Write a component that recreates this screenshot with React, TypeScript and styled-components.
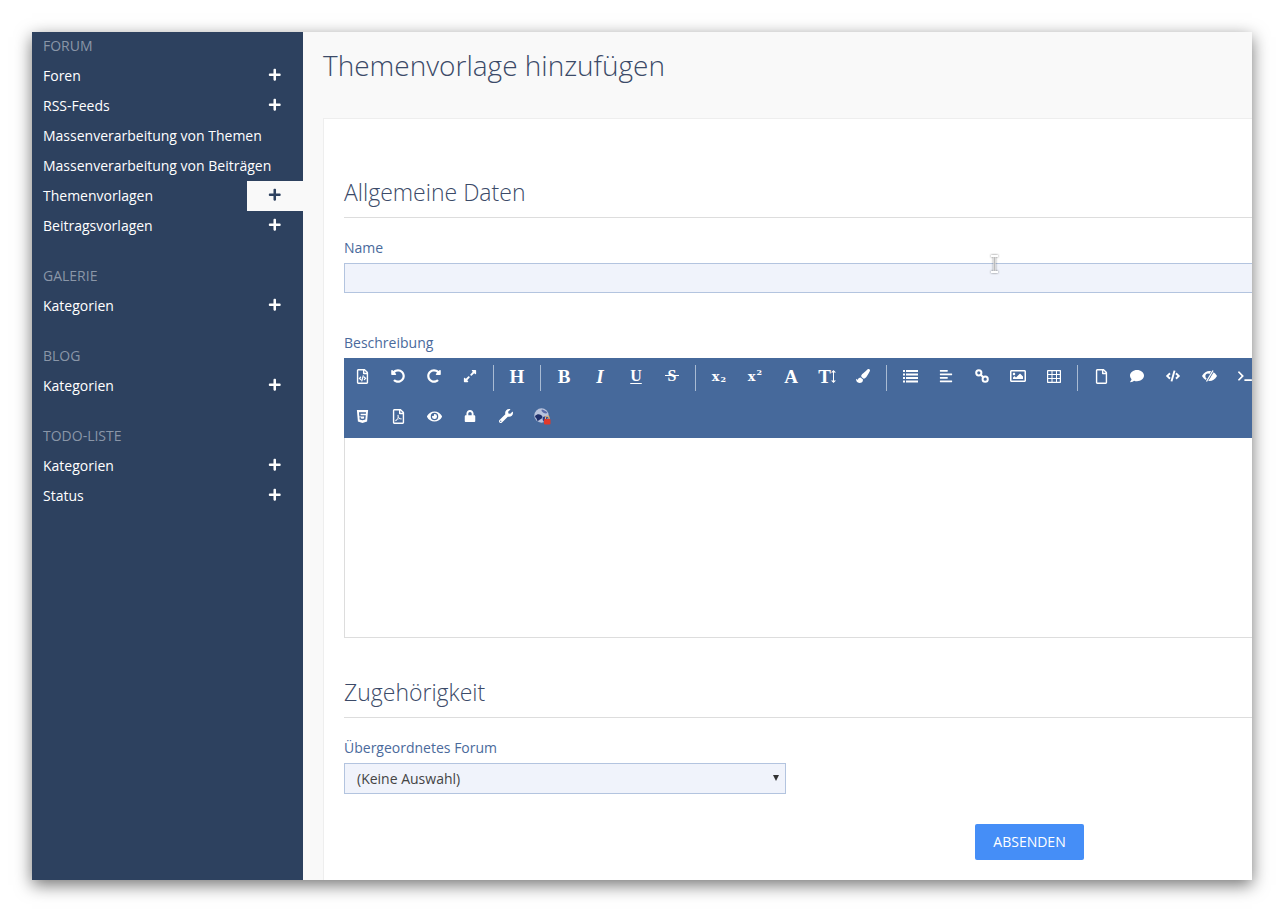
import React from "react";
import styled, { createGlobalStyle } from "styled-components";
import {
  FaPlus, FaRegFileCode, FaUndoAlt, FaRedoAlt, FaExpandAlt, FaPaintBrush, FaAlignLeft,
  FaRegImage, FaRegFile, FaComment, FaCode, FaTerminal, FaHtml5, FaRegFilePdf,
  FaEye, FaLock, FaWrench,
} from "react-icons/fa";

const Global = createGlobalStyle`
  html, body { margin: 0; padding: 0; background: #fff; }
  body { font-family: "Open Sans", "Liberation Sans", sans-serif; font-size: 14px; }
  * { box-sizing: border-box; }
`;

const Page = styled.div`
  padding: 32px;
  width: 1284px;
  height: 912px;
  overflow: hidden;
`;
const Win = styled.div`
  position: relative;
  width: 1220px;
  height: 848px;
  display: flex;
  background: #f9f9f9;
  box-shadow: 0 5px 16px rgba(0, 0, 0, 0.55);
`;
const Sidebar = styled.nav`
  width: 271px;
  flex: none;
  background: #2d415f;
  color: #fff;
`;
const Group = styled.div`
  & + & { margin-top: 20px; }
  &:first-child > h4 { height: 29px; line-height: 28px; }
`;
const GroupTitle = styled.h4`
  margin: 0;
  height: 30px;
  padding-left: 11px;
  font-size: 14px;
  line-height: 29px;
  font-weight: 400;
  color: #8a96a8;
`;
const Item = styled.div`
  height: 30px;
  padding-left: 11px;
  display: flex;
  justify-content: space-between;
  font-size: 14px;
  line-height: 29px;
`;
const PlusBox = styled.span<{ $active?: boolean }>`
  width: 56px;
  height: 30px;
  padding-bottom: 2px;
  display: flex;
  align-items: center;
  justify-content: center;
  font-size: 13.5px;
  background: ${(p) => (p.$active ? "#f9f9f9" : "transparent")};
  color: ${(p) => (p.$active ? "#2d415f" : "#fff")};
`;
const Main = styled.main`
  flex: 1;
  min-width: 0;
  overflow: hidden;
  padding-left: 20px;
`;
const PageTitle = styled.h1`
  margin: 0 0 18px;
  height: 68px;
  padding-bottom: 2px;
  display: flex;
  align-items: center;
  font-size: 28px;
  font-weight: 300;
  color: #3b4a68;
  white-space: nowrap;
`;
const Card = styled.div`
  width: 1000px;
  height: 800px;
  background: #fff;
  border: 1px solid #eeeeee;
  padding: 57px 20px 0;
`;
const SectionTitle = styled.h2<{ $spaced?: boolean }>`
  margin: ${(p) => (p.$spaced ? "38px" : "0")} 0 0;
  height: 42px;
  padding-bottom: 9px;
  border-bottom: 1px solid #dddddd;
  font-size: 23px;
  line-height: 32px;
  font-weight: 300;
  color: #3b4a68;
`;
const Label = styled.label<{ $gap: number }>`
  display: block;
  margin-top: ${(p) => p.$gap}px;
  margin-bottom: 5px;
  height: 20px;
  line-height: 20px;
  font-size: 14px;
  color: #4a6a9c;
`;
const TextInput = styled.input`
  display: block;
  width: 100%;
  height: 30px;
  background: #f0f3fb;
  border: 1px solid #b3c4df;
  outline: none;
`;
const Toolbar = styled.div`
  height: 80px;
  background: #46699b;
  color: #fff;
`;
const ToolRow = styled.div`
  height: 40px;
  display: flex;
  align-items: center;
`;
const Tool = styled.span<{ $size?: number }>`
  width: 36px;
  height: 40px;
  padding-bottom: 4px;
  flex: none;
  display: flex;
  align-items: center;
  justify-content: center;
  font-size: ${(p) => p.$size ?? 14}px;
`;
const Glyph = styled(Tool)<{ $italic?: boolean; $under?: boolean }>`
  font-family: "Liberation Serif", "DejaVu Serif", serif;
  font-weight: 700;
  font-size: ${(p) => p.$size ?? 19}px;
  font-style: ${(p) => (p.$italic ? "italic" : "normal")};
  text-decoration: ${(p) => (p.$under ? "underline" : "none")};
  text-decoration-thickness: 1px;
  text-underline-offset: 2px;
  line-height: 1;
`;
const StruckGlyph = styled(Glyph)`
  position: relative;
  &::after {
    content: "";
    position: absolute;
    left: 11px;
    width: 14px;
    top: 17px;
    height: 1px;
    background: #fff;
  }
`;
const ScriptGlyph = styled(Glyph)`
  font-family: "DejaVu Serif", serif;
  font-size: 13px;
`;
const Small = styled.span<{ $up?: boolean }>`
  font-size: 8px;
  margin-left: 1px;
  transform: translateY(${(p) => (p.$up ? "-4px" : "3px")});
`;
const Sep = styled.span`
  width: 1px;
  height: 26px;
  flex: none;
  margin: 0 5px;
  background: #a9bbd3;
`;
const Editor = styled.div`
  height: 200px;
  background: #fff;
  border: 1px solid #dddddd;
  border-top: none;
`;
const SelectWrap = styled.div`
  position: relative;
  width: 442px;
  &::after {
    content: "";
    position: absolute;
    right: 7px;
    top: 12px;
    border-left: 3px solid transparent;
    border-right: 3px solid transparent;
    border-top: 6px solid #333;
  }
`;
const Select = styled.select`
  appearance: none;
  display: block;
  width: 100%;
  height: 31px;
  padding: 0 0 0 12px;
  background: #f0f3fb;
  border: 1px solid #b3c4df;
  border-radius: 0;
  font-family: inherit;
  font-size: 14px;
  color: #444;
  outline: none;
`;
const Submit = styled.button`
  display: block;
  margin: 30px 0 0 631px;
  width: 109px;
  height: 36px;
  padding: 0 0 2px;
  border: none;
  border-radius: 2px;
  background: #458ef7;
  color: #fff;
  font-family: inherit;
  font-size: 14px;
`;
const Cursor = styled.svg`
  position: absolute;
  left: 958px;
  top: 223px;
  filter: drop-shadow(0 0 1px rgba(0, 0, 0, 0.55));
`;

const ListIcon = () => (
  <svg width="15" height="13" viewBox="0 0 15 13" aria-hidden fill="#fff">
    <rect x="0" y="0" width="2" height="2" />
    <rect x="3" y="0" width="12" height="2" />
    <rect x="0" y="3.5" width="2" height="2" />
    <rect x="3" y="3.5" width="12" height="2" />
    <rect x="0" y="7" width="2" height="2" />
    <rect x="3" y="7" width="12" height="2" />
    <rect x="0" y="10.5" width="2" height="2" />
    <rect x="3" y="10.5" width="12" height="2" />
  </svg>
);
const LinkIcon = () => (
  <svg width="14" height="14" viewBox="0 0 14 14" aria-hidden fill="none" stroke="#fff" strokeWidth="2">
    <circle cx="3.8" cy="3.8" r="2.6" />
    <circle cx="10.2" cy="10.2" r="2.6" />
    <path d="M5.5 5.5l3 3" />
  </svg>
);
const TableIcon = () => (
  <svg width="14" height="13" viewBox="0 0 14 13" aria-hidden fill="none" stroke="#fff" strokeWidth="1">
    <rect x="0.5" y="0.5" width="13" height="12" rx="1" strokeWidth="1.4" />
    <path d="M0.5 4.5h13M0.5 8.5h13M5 1v11M9.5 1v11" />
  </svg>
);
const EyeSlashIcon = () => (
  <svg width="15" height="12" viewBox="0 0 15 12" aria-hidden>
    <path d="M0 6c2-3.5 4.5-5 7.5-5s5.500 1.500 7.500 5c-2 3.500-4.500 5-7.500 5S2 9.500 0 6z" fill="#fff" />
    <circle cx="6" cy="6" r="2.6" fill="#46699b" />
    <path d="M4 12L11.500 0" stroke="#46699b" strokeWidth="2.6" />
    <path d="M4.500 11.500L11 0.500" stroke="#fff" strokeWidth="1.3" />
  </svg>
);
const SizeArrow = () => (
  <svg width="5" height="13" viewBox="0 0 5 13" aria-hidden fill="#fff">
    <rect x="2" y="1" width="1" height="11" />
    <path d="M2.500 0L5 2.500H0zM2.500 13L0 10.500H5z" />
  </svg>
);
const Globe = () => (
  <svg width="17" height="17" viewBox="0 0 17 17" aria-hidden>
    <circle cx="7.500" cy="7.500" r="7.200" fill="#b8c2dc" />
    <path d="M1 8c2-2 4-2 6-1s2 3 0 4-4 3-4 1S1 10 1 8z" fill="#1f2f6a" />
    <path d="M8 1.500c2 1 4 1 5.500 3.500-2 1-4 0-5-1S7 2 8 1.500z" fill="#5a6aa8" />
    <path d="M9 9c2-1 4-1 5 0-.5 2-2 4-4 5-1-1-2-3-1-5z" fill="#2f3f88" />
    <rect x="10" y="11" width="6.500" height="5.500" rx="1" fill="#e0392b" />
    <path d="M11.500 11V9.800a1.800 1.800 0 0 1 3.600 0V11" fill="none" stroke="#e8b070" strokeWidth="1.200" />
  </svg>
);

const groups: { title: string; items: { label: string; plus?: boolean; active?: boolean }[] }[] = [
  {
    title: "FORUM",
    items: [
      { label: "Foren", plus: true },
      { label: "RSS-Feeds", plus: true },
      { label: "Massenverarbeitung von Themen" },
      { label: "Massenverarbeitung von Beiträgen" },
      { label: "Themenvorlagen", plus: true, active: true },
      { label: "Beitragsvorlagen", plus: true },
    ],
  },
  { title: "GALERIE", items: [{ label: "Kategorien", plus: true }] },
  { title: "BLOG", items: [{ label: "Kategorien", plus: true }] },
  {
    title: "TODO-LISTE",
    items: [
      { label: "Kategorien", plus: true },
      { label: "Status", plus: true },
    ],
  },
];

export default function App() {
  return (
    <Page>
      <Global />
      <Win>
        <Sidebar>
          {groups.map((g) => (
            <Group key={g.title}>
              <GroupTitle>{g.title}</GroupTitle>
              {g.items.map((it) => (
                <Item key={it.label}>
                  <span>{it.label}</span>
                  {it.plus && (
                    <PlusBox $active={it.active}>
                      <FaPlus />
                    </PlusBox>
                  )}
                </Item>
              ))}
            </Group>
          ))}
        </Sidebar>
        <Main>
          <PageTitle>Themenvorlage hinzufügen</PageTitle>
          <Card>
            <SectionTitle>Allgemeine Daten</SectionTitle>
            <Label $gap={20}>Name</Label>
            <TextInput />
            <Label $gap={40}>Beschreibung</Label>
            <Toolbar>
              <ToolRow>
                <Tool $size={15}><FaRegFileCode /></Tool>
                <Tool><FaUndoAlt /></Tool>
                <Tool><FaRedoAlt /></Tool>
                <Tool><FaExpandAlt /></Tool>
                <Sep />
                <Glyph>H</Glyph>
                <Sep />
                <Glyph>B</Glyph>
                <Glyph $italic>I</Glyph>
                <Glyph $under $size={16}>U</Glyph>
                <StruckGlyph $size={16}>S</StruckGlyph>
                <Sep />
                <ScriptGlyph>x<Small>2</Small></ScriptGlyph>
                <ScriptGlyph>x<Small $up>2</Small></ScriptGlyph>
                <Glyph>A</Glyph>
                <Glyph>T<SizeArrow /></Glyph>
                <Tool><FaPaintBrush /></Tool>
                <Sep />
                <Tool><ListIcon /></Tool>
                <Tool><FaAlignLeft /></Tool>
                <Tool><LinkIcon /></Tool>
                <Tool $size={16}><FaRegImage /></Tool>
                <Tool><TableIcon /></Tool>
                <Sep />
                <Tool $size={15}><FaRegFile /></Tool>
                <Tool><FaComment /></Tool>
                <Tool><FaCode /></Tool>
                <Tool><EyeSlashIcon /></Tool>
                <Tool><FaTerminal /></Tool>
              </ToolRow>
              <ToolRow>
                <Tool $size={15}><FaHtml5 /></Tool>
                <Tool $size={15}><FaRegFilePdf /></Tool>
                <Tool $size={15}><FaEye /></Tool>
                <Tool $size={12}><FaLock /></Tool>
                <Tool><FaWrench /></Tool>
                <Tool><Globe /></Tool>
              </ToolRow>
            </Toolbar>
            <Editor />
            <SectionTitle $spaced>Zugehörigkeit</SectionTitle>
            <Label $gap={20}>Übergeordnetes Forum</Label>
            <SelectWrap>
              <Select defaultValue="">
                <option value="">(Keine Auswahl)</option>
              </Select>
            </SelectWrap>
            <Submit>ABSENDEN</Submit>
          </Card>
        </Main>
        <Cursor width="9" height="18" viewBox="0 0 9 18" aria-hidden>
          <path d="M1 1h7M4.500 1v16M1 17h7" stroke="#fff" strokeWidth="2" fill="none" />
          <path d="M4.500 2v14" stroke="#bbb" strokeWidth="1" fill="none" />
        </Cursor>
      </Win>
    </Page>
  );
}
